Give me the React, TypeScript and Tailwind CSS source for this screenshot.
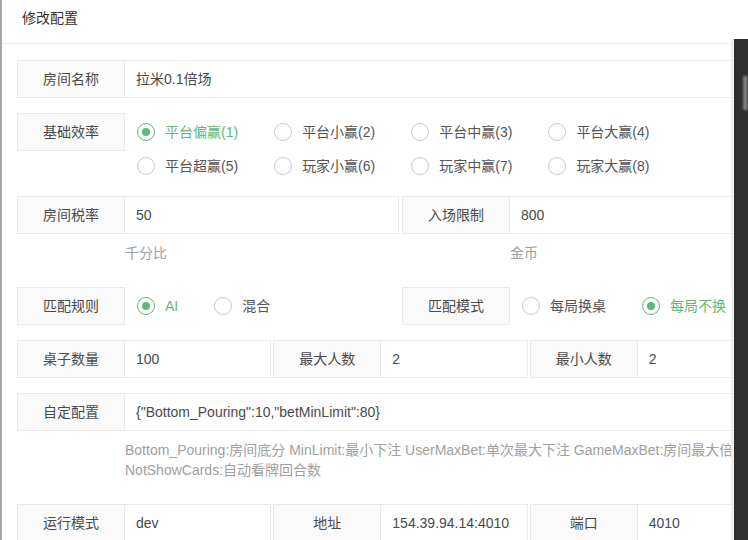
import type { ReactNode } from "react";

const Label = ({ children }: { children: ReactNode }) => (
  <div className="w-[108px] shrink-0 h-[38px] border border-[#e9e9e9] bg-[#fafafa] flex items-center justify-center text-[#4a4a4a]">
    {children}
  </div>
);

const Field = ({ label, value }: { label: string; value: string }) => (
  <div className="flex min-w-0">
    <Label>{label}</Label>
    <div className="flex-1 min-w-0 h-[38px] border border-l-0 border-[#e9e9e9] pl-[11px] flex items-center text-[#4a4a4a] whitespace-nowrap overflow-hidden">
      {value}
    </div>
  </div>
);

const Radio = ({ label, checked = false }: { label: string; checked?: boolean }) => (
  <div className="flex items-center h-[34px] mr-[36px] shrink-0">
    <span
      className={`w-[18px] h-[18px] rounded-full border-[1.5px] flex items-center justify-center ${
        checked ? "border-[#5fb878]" : "border-[#c9c9c9]"
      }`}
    >
      {checked && <span className="w-[8px] h-[8px] rounded-full bg-[#5fb878]" />}
    </span>
    <span className={`ml-[10px] whitespace-nowrap ${checked ? "text-[#5fb878]" : "text-[#555]"}`}>{label}</span>
  </div>
);

const Hint = ({ children }: { children: ReactNode }) => (
  <div className="pl-[108px] py-[9px] leading-5 text-[#a0a0a0] whitespace-nowrap">{children}</div>
);

const rates = [
  ["平台偏赢(1)", "平台小赢(2)", "平台中赢(3)", "平台大赢(4)"],
  ["平台超赢(5)", "玩家小赢(6)", "玩家中赢(7)", "玩家大赢(8)"],
];

export default function App() {
  return (
    <div className="relative w-[748px] h-[540px] overflow-hidden bg-white border-l-2 border-[#a8a8a8] font-['Liberation_Sans','Noto_Sans_CJK_SC',sans-serif] text-sm">
      <div className="h-[44px] border-b border-[#eeeeee] pl-[20px] pt-[8px] text-[#333]">修改配置</div>

      <div className="pl-[15px] pt-[16px]">
        <div className="w-[767px]">
          <div className="mb-[15px]">
            <Field label="房间名称" value="拉米0.1倍场" />
          </div>

          <div className="flex mb-[13px]">
            <Label>基础效率</Label>
            <div className="pl-[12px] mt-[2px]">
              {rates.map((line, i) => (
                <div key={i} className="flex">
                  {line.map((r, j) => (
                    <Radio key={r} label={r} checked={i === 0 && j === 0} />
                  ))}
                </div>
              ))}
            </div>
          </div>

          <div className="grid grid-cols-2 gap-x-[3px] mb-[15px]">
            <div>
              <Field label="房间税率" value="50" />
              <Hint>千分比</Hint>
            </div>
            <div>
              <Field label="入场限制" value="800" />
              <Hint>金币</Hint>
            </div>
          </div>

          <div className="grid grid-cols-2 gap-x-[3px] mb-[15px]">
            <div className="flex">
              <Label>匹配规则</Label>
              <div className="flex items-center pl-[12px]">
                <Radio label="AI" checked />
                <Radio label="混合" />
              </div>
            </div>
            <div className="flex">
              <Label>匹配模式</Label>
              <div className="flex items-center pl-[12px]">
                <Radio label="每局换桌" />
                <Radio label="每局不换" checked />
              </div>
            </div>
          </div>

          <div className="grid grid-cols-3 gap-x-[2px] mb-[15px]">
            <Field label="桌子数量" value="100" />
            <Field label="最大人数" value="2" />
            <Field label="最小人数" value="2" />
          </div>

          <div>
            <Field label="自定配置" value={'{"Bottom_Pouring":10,"betMinLimit":80}'} />
            <Hint>
              Bottom_Pouring:房间底分 MinLimit:最小下注 UserMaxBet:单次最大下注 GameMaxBet:房间最大倍数
              <br />
              NotShowCards:自动看牌回合数
            </Hint>
          </div>

          <div className="grid grid-cols-3 gap-x-[2px] mt-[15px]">
            <Field label="运行模式" value="dev" />
            <Field label="地址" value="154.39.94.14:4010" />
            <Field label="端口" value="4010" />
          </div>
        </div>
      </div>

      {/* neighbouring window on the right */}
      <div className="absolute left-[729px] top-[39px] right-0 bottom-0 border-l-[3px] border-[#efefef] bg-[#2f2f2f]">
        <div className="absolute left-[9px] right-0 top-[37px] h-[34px] bg-gradient-to-r from-[#6f6f6f] via-[#8a8a8a] to-[#5a5a5a] blur-[1px]" />
      </div>
    </div>
  );
}
